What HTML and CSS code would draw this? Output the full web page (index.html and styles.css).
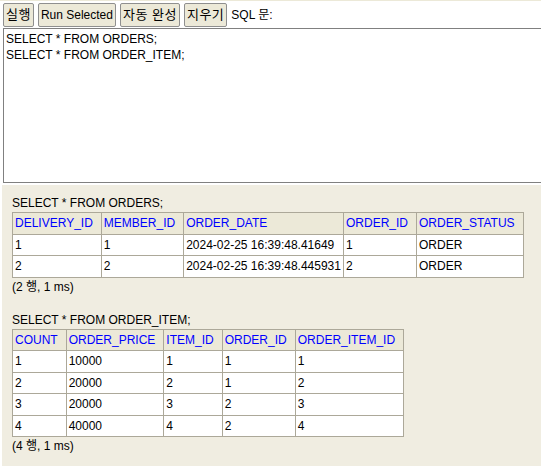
FILE: index.html
```html
<!DOCTYPE html>
<html lang="ko">
<head>
<meta charset="utf-8">
<title>H2 Console</title>
<link rel="stylesheet" href="styles.css">
</head>
<body>
<div class="query">
  <div class="toolbar">
    <button class="btn ko">실행</button>
    <button class="btn">Run Selected</button>
    <button class="btn ko">자동 완성</button>
    <button class="btn ko">지우기</button>
    <span class="label">SQL 문:</span>
  </div>
  <textarea class="sql" spellcheck="false">SELECT * FROM ORDERS;
SELECT * FROM ORDER_ITEM;</textarea>
</div>
<div class="result">
  <div class="stmt">SELECT * FROM ORDERS;</div>
  <table class="rs">
    <tr><th>DELIVERY_ID</th><th>MEMBER_ID</th><th>ORDER_DATE</th><th>ORDER_ID</th><th>ORDER_STATUS</th></tr>
    <tr><td>1</td><td>1</td><td>2024-02-25 16:39:48.41649</td><td>1</td><td>ORDER</td></tr>
    <tr><td>2</td><td>2</td><td>2024-02-25 16:39:48.445931</td><td>2</td><td>ORDER</td></tr>
  </table>
  <div class="summary">(2 행, 1 ms)</div>
  <div class="stmt next">SELECT * FROM ORDER_ITEM;</div>
  <table class="rs">
    <tr><th>COUNT</th><th>ORDER_PRICE</th><th>ITEM_ID</th><th>ORDER_ID</th><th>ORDER_ITEM_ID</th></tr>
    <tr><td>1</td><td>10000</td><td>1</td><td>1</td><td>1</td></tr>
    <tr><td>2</td><td>20000</td><td>2</td><td>1</td><td>2</td></tr>
    <tr><td>3</td><td>20000</td><td>3</td><td>2</td><td>3</td></tr>
    <tr><td>4</td><td>40000</td><td>4</td><td>2</td><td>4</td></tr>
  </table>
  <div class="summary">(4 행, 1 ms)</div>
</div>
</body>
</html>
```

FILE: styles.css
```css
html, body {
  margin: 0;
  padding: 0;
  height: 100%;
  overflow: hidden;
  background: #fff;
}

body {
  font-family: "Liberation Sans", "Noto Sans CJK KR", sans-serif;
  font-size: 12px;
  color: #000;
  display: flex;
  flex-direction: column;
}

.query {
  border-top: 1px solid #ece9d8;
  padding: 2px 0 2px 3px;
  background: #fff;
}

.toolbar {
  display: flex;
  align-items: center;
  gap: 4px;
  height: 24px;
}

.btn {
  font-family: inherit;
  font-size: 12px;
  color: #000;
  height: 24px;
  line-height: 16px;
  margin: 0;
  padding: 0 2px;
  border: 1px solid #8f8f8f;
  border-radius: 2px;
  background: #ece9d8;
  white-space: nowrap;
}

.btn.ko {
  font-size: 13px;
  letter-spacing: 0.5px;
}

.label {
  line-height: 16px;
  white-space: nowrap;
}

.sql {
  display: block;
  box-sizing: border-box;
  width: 600px;
  height: 155px;
  margin: 1px 0 0 0;
  padding: 2px;
  border: 1px solid #808080;
  font-family: "Liberation Sans", "Noto Sans CJK KR", sans-serif;
  font-size: 12px;
  line-height: 16px;
  color: #000;
  resize: none;
  outline: none;
  overflow: hidden;
}

.result {
  flex: 1;
  margin-left: 2px;
  background: #f0ede1;
  padding: 9px 0 0 10px;
}

.stmt {
  line-height: 18px;
  white-space: nowrap;
}

.stmt.next {
  margin-top: 15px;
}

.summary {
  line-height: 18px;
  white-space: nowrap;
}

.rs {
  border-collapse: collapse;
  border-spacing: 0;
}

.rs th {
  text-align: left;
  font-weight: normal;
  color: #0000ff;
  background: #ece9d8;
  border: 1px solid #aca899;
  padding: 2px 8px 2px 2px;
  line-height: 16.5px;
  white-space: nowrap;
}

.rs td {
  background: #fff;
  border: 1px solid #aca899;
  padding: 2px;
  line-height: 16.5px;
  white-space: nowrap;
}
```
